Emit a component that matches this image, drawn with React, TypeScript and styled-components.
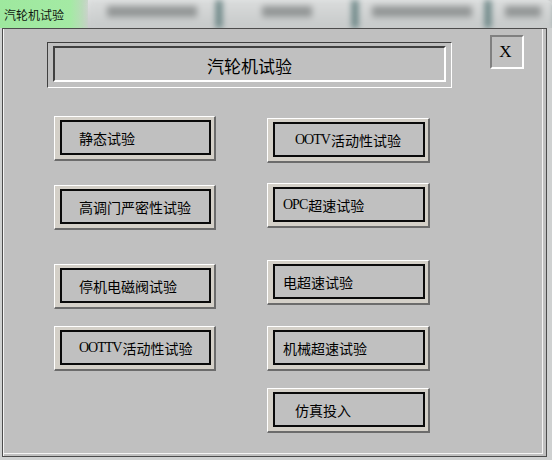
import styled, { createGlobalStyle } from 'styled-components';

const GlobalStyle = createGlobalStyle`
	html, body {
		margin: 0;
		padding: 0;
		background: #cdcfcf;
		width: 552px;
		height: 460px;
		overflow: hidden;
	}
	body {
		font-family: "Noto Sans CJK SC", "Liberation Sans", sans-serif;
	}
`

const Screen = styled.div`
	width: 552px;
	height: 460px;
	display: flex;
	flex-direction: column;
	background: #cfd1d1;
`

const TabBar = styled.div`
	height: 28px;
	display: flex;
	overflow: hidden;
	background: linear-gradient(#e4e6e6, #c9cccc);
	border-top-right-radius: 6px;
`

const ActiveTab = styled.div`
	width: 88px;
	flex: none;
	display: flex;
	align-items: center;
	padding-left: 4px;
	box-sizing: border-box;
	font-size: 12px;
	color: #101810;
	background: linear-gradient(90deg, #9ee89e 0%, #a4eaa4 80%, #c4d4c4 100%);
`

const BlurredTabs = styled.div`
	flex: 1;
	display: flex;
	filter: blur(3px);
`

const Tab = styled.div<{ $w: number }>`
	width: ${p => p.$w}px;
	flex: none;
	display: flex;
	align-items: flex-start;
	justify-content: center;
	padding-top: 6px;
	box-sizing: border-box;
	border-right: 6px solid #5c7a7a;
	background: linear-gradient(#dadcdc, #c6c9c9);
`

const Smudge = styled.div<{ $w: number }>`
	width: ${p => p.$w}px;
	height: 11px;
	background: #7e8282;
	opacity: 0.75;
`

const Panel = styled.div`
	width: 545px;
	height: 429px;
	margin-left: 2px;
	box-sizing: border-box;
	border: 1px solid #4c4c4c;
	background: #c0c0c0;
	box-shadow: inset 1px 0 0 #f4f4f4, inset -3px -2px 0 #c0c0c0, inset -4px -3px 0 #f4f4f4;
	display: flex;
	flex-direction: column;
`

const HeaderRow = styled.div`
	display: flex;
	align-items: flex-start;
	margin-top: 6px;
	padding-left: 44px;
`

const TitleOuter = styled.div`
	width: 405px;
	height: 46px;
	box-sizing: border-box;
	margin-top: 7px;
	border-top: 1px solid #404040;
	border-left: 1px solid #404040;
	border-bottom: 1px solid #ffffff;
	border-right: 1px solid #ffffff;
	padding: 3px 5px 5px 5px;
`

const TitleInner = styled.div`
	height: 100%;
	box-sizing: border-box;
	border-top: 2px solid #404040;
	border-left: 2px solid #404040;
	border-bottom: 2px solid #ffffff;
	border-right: 2px solid #ffffff;
	display: flex;
	align-items: center;
	justify-content: center;
	font-size: 17px;
	color: #000;
	padding-top: 2px;
`

const CloseButton = styled.div`
	width: 34px;
	height: 34px;
	margin-left: 38px;
	box-sizing: border-box;
	border-top: 2px solid #808080;
	border-left: 2px solid #808080;
	border-bottom: 2px solid #ffffff;
	border-right: 2px solid #ffffff;
	display: flex;
	align-items: center;
	justify-content: center;
	padding-right: 3px;
	font-family: "Liberation Serif", serif;
	font-size: 17px;
	color: #000;
`

const Columns = styled.div`
	display: flex;
	margin-top: 28px;
	padding-left: 51px;
	gap: 51px;
`

const Column = styled.div`
	display: flex;
	flex-direction: column;
`

const Button = styled.div<{ $top: number; $w: number }>`
	width: ${p => p.$w}px;
	height: 45px;
	margin-top: ${p => p.$top}px;
	box-sizing: border-box;
	background: #d4d0c8;
	border-top: 1px solid #ffffff;
	border-left: 1px solid #ffffff;
	border-right: 2px solid #6c6c6c;
	border-bottom: 2px solid #6c6c6c;
	padding: 3px 3px 4px 5px;
`

const ButtonFace = styled.div<{ $pad: number }>`
	height: 100%;
	box-sizing: border-box;
	border: 2px solid #0a0a0a;
	background: #c0c0c0;
	display: flex;
	align-items: center;
	padding-left: ${p => p.$pad}px;
	font-size: 14px;
	color: #000;
	white-space: nowrap;
`

const Latin = styled.span`
	font-family: "Liberation Serif", serif;
	font-size: 14px;
	letter-spacing: -1px;
	margin-right: 1px;
`

type Item = { label: string; top: number; pad: number };

const leftItems: Item[] = [
	{ label: '静态试验', top: 0, pad: 17 },
	{ label: '高调门严密性试验', top: 24, pad: 17 },
	{ label: '停机电磁阀试验', top: 34, pad: 17 },
	{ label: 'OOTTV活动性试验', top: 17, pad: 17 },
];

const rightItems: Item[] = [
	{ label: 'OOTV活动性试验', top: 2, pad: 20 },
	{ label: 'OPC超速试验', top: 20, pad: 8 },
	{ label: '电超速试验', top: 32, pad: 8 },
	{ label: '机械超速试验', top: 21, pad: 8 },
	{ label: '仿真投入', top: 17, pad: 20 },
];

const renderLabel = (label: string) =>
	label.split(/([A-Za-z]+)/).filter(Boolean).map((part, i) =>
		/^[A-Za-z]+$/.test(part) ? <Latin key={i}>{part}</Latin> : <span key={i}>{part}</span>
	);

const TestButton = ({ item, width }: { item: Item; width: number }) => (
	<Button $top={item.top} $w={width}>
		<ButtonFace $pad={item.pad}>{renderLabel(item.label)}</ButtonFace>
	</Button>
);

const App = () => {
	return (
		<Screen>
			<GlobalStyle />
			<TabBar>
				<ActiveTab>汽轮机试验</ActiveTab>
				<BlurredTabs>
					<Tab $w={134}><Smudge $w={90} /></Tab>
					<Tab $w={136}><Smudge $w={50} /></Tab>
					<Tab $w={133}><Smudge $w={100} /></Tab>
					<Tab $w={70}><Smudge $w={36} /></Tab>
				</BlurredTabs>
			</TabBar>
			<Panel>
				<HeaderRow>
					<TitleOuter>
						<TitleInner>汽轮机试验</TitleInner>
					</TitleOuter>
					<CloseButton>X</CloseButton>
				</HeaderRow>
				<Columns>
					<Column>
						{leftItems.map(item => <TestButton key={item.label} item={item} width={162} />)}
					</Column>
					<Column>
						{rightItems.map(item => <TestButton key={item.label} item={item} width={163} />)}
					</Column>
				</Columns>
			</Panel>
		</Screen>
	)
}

export default App;
